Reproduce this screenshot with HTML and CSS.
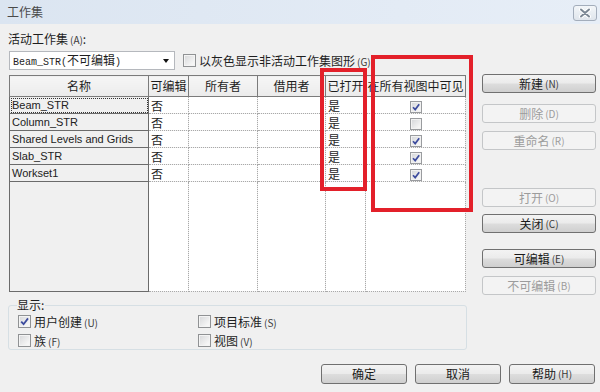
FILE: index.html
```html
<!DOCTYPE html>
<html lang="zh-CN">
<head>
<meta charset="utf-8">
<title>工作集</title>
<link rel="stylesheet" href="styles.css">
</head>
<body>
<div class="dialog">
  <div class="titlebar">
    <span class="title">工作集</span>
    <span class="close"><svg width="14" height="10" viewBox="0 0 14 10"><path d="M3 1.5 L11 8.5 M11 1.5 L3 8.5" stroke="#ffffff" stroke-width="4" stroke-linecap="round"/><path d="M3 1.5 L11 8.5 M11 1.5 L3 8.5" stroke="#7b8794" stroke-width="2" stroke-linecap="round"/></svg></span>
  </div>

  <div class="active-label">活动工作集<span class="acc">(A)</span>:</div>

  <div class="active-row">
    <div class="select">
      <span class="select-text"><span class="mono">Beam_STR(</span>不可编辑<span class="mono">)</span></span>
      <span class="arrow"></span>
    </div>
    <div class="chk"><span class="box"></span><span>以灰色显示非活动工作集图形<span class="acc">(G)</span></span></div>
  </div>

  <div class="middle">
    <table class="grid">
      <colgroup>
        <col class="c-name"><col class="c-edit"><col class="c-owner"><col class="c-borrow"><col class="c-open"><col class="c-vis">
      </colgroup>
      <thead>
        <tr><th>名称</th><th>可编辑</th><th>所有者</th><th>借用者</th><th>已打开</th><th>在所有视图中可见</th></tr>
      </thead>
      <tbody>
        <tr><td class="name focus">Beam_STR</td><td>否</td><td></td><td></td><td>是</td><td class="vis"><span class="cb on"><svg width="10" height="10" viewBox="0 0 10 10"><path d="M2 5.2 L4.2 7.6 L8.2 2.2" fill="none" stroke="#3d4c9e" stroke-width="1.7"/></svg></span></td></tr>
        <tr><td class="name">Column_STR</td><td>否</td><td></td><td></td><td>是</td><td class="vis"><span class="cb"></span></td></tr>
        <tr><td class="name">Shared Levels and Grids</td><td>否</td><td></td><td></td><td>是</td><td class="vis"><span class="cb on"><svg width="10" height="10" viewBox="0 0 10 10"><path d="M2 5.2 L4.2 7.6 L8.2 2.2" fill="none" stroke="#3d4c9e" stroke-width="1.7"/></svg></span></td></tr>
        <tr><td class="name">Slab_STR</td><td>否</td><td></td><td></td><td>是</td><td class="vis"><span class="cb on"><svg width="10" height="10" viewBox="0 0 10 10"><path d="M2 5.2 L4.2 7.6 L8.2 2.2" fill="none" stroke="#3d4c9e" stroke-width="1.7"/></svg></span></td></tr>
        <tr><td class="name">Workset1</td><td>否</td><td></td><td></td><td>是</td><td class="vis"><span class="cb on"><svg width="10" height="10" viewBox="0 0 10 10"><path d="M2 5.2 L4.2 7.6 L8.2 2.2" fill="none" stroke="#3d4c9e" stroke-width="1.7"/></svg></span></td></tr>
        <tr class="filler"><td class="name"></td><td></td><td></td><td></td><td></td><td></td></tr>
      </tbody>
    </table>

    <div class="side">
      <div class="btn b-new">新建<span class="acc">(N)</span></div>
      <div class="btn disabled b-del">删除<span class="acc">(D)</span></div>
      <div class="btn disabled b-ren">重命名<span class="acc">(R)</span></div>
      <div class="btn disabled b-open">打开<span class="acc">(O)</span></div>
      <div class="btn b-close">关闭<span class="acc">(C)</span></div>
      <div class="btn b-edit">可编辑<span class="acc">(E)</span></div>
      <div class="btn disabled b-noedit">不可编辑<span class="acc">(B)</span></div>
    </div>
  </div>

  <fieldset class="show">
    <legend>显示:</legend>
    <div class="show-grid">
      <div class="chk"><span class="box on"><svg width="11" height="11" viewBox="0 0 11 11"><path d="M2.2 5.6 L4.6 8.2 L9 2.4" fill="none" stroke="#3d4c9e" stroke-width="1.8"/></svg></span><span>用户创建<span class="acc">(U)</span></span></div>
      <div class="chk"><span class="box"></span><span>项目标准<span class="acc">(S)</span></span></div>
      <div class="chk"><span class="box"></span><span>族<span class="acc">(F)</span></span></div>
      <div class="chk"><span class="box"></span><span>视图<span class="acc">(V)</span></span></div>
    </div>
  </fieldset>

  <div class="footer">
    <div class="btn fbtn">确定</div>
    <div class="btn fbtn">取消</div>
    <div class="btn fbtn">帮助<span class="acc">(H)</span></div>
  </div>

  <div class="mark mark-open"></div>
  <div class="mark mark-vis"></div>
</div>
</body>
</html>
```

FILE: styles.css
```css
* { box-sizing: border-box; }
html, body { margin: 0; padding: 0; }
body {
  width: 600px;
  height: 392px;
  overflow: hidden;
  background: #f0f0f0;
  font-family: "Noto Sans CJK SC", "Liberation Sans", sans-serif;
  font-size: 12px;
  color: #1e1e1e;
}
.dialog { position: relative; width: 600px; height: 392px; }

.titlebar {
  height: 24px;
  background: linear-gradient(to right, #dbe5f1, #e7eef7);
  display: flex;
  align-items: center;
  justify-content: space-between;
  padding: 0 3px 0 7px;
}
.title { font-size: 12px; line-height: 14px; color: #4a4a4a; }
.close {
  width: 24px;
  height: 16px;
  border: 1px solid #a3adbb;
  border-radius: 3px;
  background: linear-gradient(#f3f6f9, #dfe5ec);
  display: flex;
  align-items: center;
  justify-content: center;
  margin-top: 1px;
}

.acc { font-size: 10px; margin-left: 2px; color: #3a3a3a; }
.btn.disabled .acc { color: inherit; }

.active-label { padding: 7px 0 0 8px; line-height: 16px; }

.active-row {
  display: flex;
  align-items: center;
  height: 19px;
  margin-top: 3px;
  padding-left: 9px;
}
.select {
  width: 166px;
  height: 19px;
  background: #fff;
  border: 1px solid #b5b8bd;
  display: flex;
  align-items: center;
  padding-left: 3px;
  line-height: 15px;
}
.mono { font-family: "Liberation Mono", monospace; font-size: 10px; }
.arrow {
  margin-left: auto;
  margin-right: 5px;
  width: 0;
  height: 0;
  border-left: 3.5px solid transparent;
  border-right: 3.5px solid transparent;
  border-top: 4px solid #111;
}

.chk { display: flex; align-items: center; gap: 3px; line-height: 13px; height: 13px; }
.active-row .chk { margin-left: 8px; }
.box {
  width: 13px;
  height: 13px;
  border: 1px solid #909294;
  background: linear-gradient(135deg, #d6d7d9, #f6f6f6 80%);
  box-shadow: inset 0 0 0 1px #f4f4f4;
  display: flex;
  align-items: center;
  justify-content: center;
  flex: none;
}

.middle { display: flex; margin-top: 5px; padding-left: 9px; }

.grid {
  border-collapse: collapse;
  table-layout: fixed;
  width: 456px;
  height: 217px;
}
.c-name { width: 139px; }
.c-edit { width: 40px; }
.c-owner { width: 69px; }
.c-borrow { width: 68px; }
.c-open { width: 40px; }
.c-vis { width: 100px; }

.grid th {
  height: 21px;
  padding: 0;
  font-weight: normal;
  text-align: center;
  white-space: nowrap;
  overflow: hidden;
  background: linear-gradient(#f6f6f6, #ebebeb);
  border: 1px solid #7b7b7b;
  line-height: 18px;
}
.grid td {
  height: 17px;
  padding: 0 0 0 2px;
  background: #fff;
  border: 1px dotted #a9a9a9;
  white-space: nowrap;
  overflow: hidden;
  line-height: 15px;
}
.grid td.name {
  background: #f0f0f0;
  border: 1px solid #6b6b6b;
  font-family: "Liberation Sans", sans-serif;
  font-size: 11px;
  color: #222;
}
.grid td.focus { outline: 1px dotted #333; outline-offset: -2px; }
.grid tr.filler td { height: auto; }
.grid td.vis { text-align: center; padding: 0; }
.cb {
  display: inline-flex;
  align-items: center;
  justify-content: center;
  width: 12px;
  height: 12px;
  vertical-align: middle;
  border: 1px solid #9a9c9f;
  background: linear-gradient(135deg, #d3d5d8, #f5f5f5 80%);
  box-shadow: inset 0 0 0 1px #f2f2f2;
}

.side { width: 114px; margin-left: 16px; margin-top: -1px; display: flex; flex-direction: column; }
.btn {
  height: 19px;
  border: 1px solid #707070;
  border-radius: 3px;
  background: linear-gradient(#f3f3f3 0%, #ebebeb 48%, #dddddd 52%, #cfcfcf 100%);
  display: flex;
  align-items: center;
  justify-content: center;
  line-height: 14px;
  color: #1a1a1a;
}
.btn.disabled {
  border-color: #c4c6c8;
  background: #f3f3f3;
  color: #9c9c9c;
}
.b-del { margin-top: 11px; }
.b-ren { margin-top: 8px; }
.b-open { margin-top: 38px; }
.b-close { margin-top: 7px; }
.b-edit { margin-top: 16px; }
.b-noedit { margin-top: 8px; }

.show {
  margin: 3px 0 0 8px;
  width: 459px;
  height: 52px;
  border: 1px solid #d6dfe4;
  border-radius: 3px;
  padding: 3px 0 0 9px;
}
.show legend { padding: 0 1px 0 0; margin-left: -1px; line-height: 14px; }
.show-grid {
  display: grid;
  grid-template-columns: 180px 1fr;
  row-gap: 6px;
}

.footer {
  display: flex;
  justify-content: flex-end;
  gap: 8px;
  padding-right: 5px;
  margin-top: 14px;
}
.fbtn { width: 86px; height: 20px; }

.mark {
  position: absolute;
  border: 4px solid #e3202a;
}
.mark-open { left: 320px; top: 68px; width: 47px; height: 123px; }
.mark-vis { left: 371px; top: 55px; width: 102px; height: 157px; }
```
